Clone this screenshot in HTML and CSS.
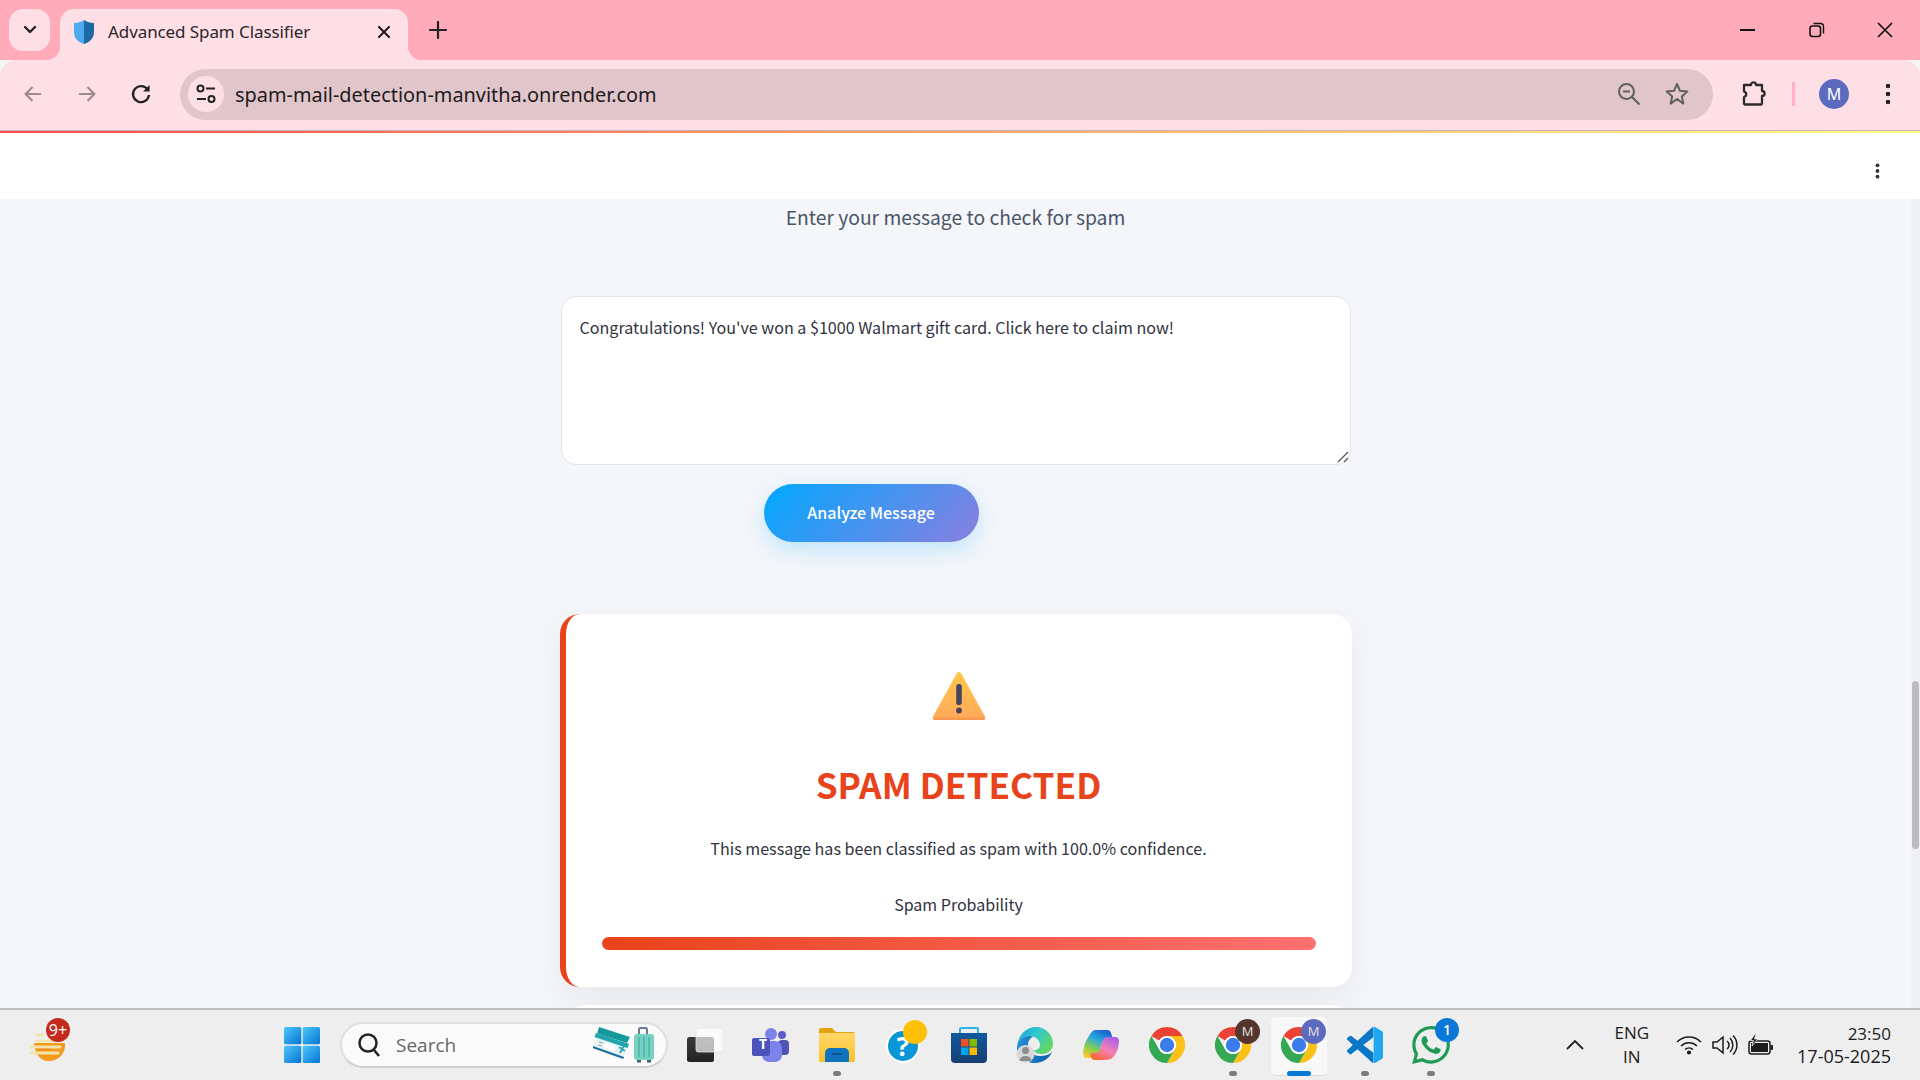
FILE: index.html
```html
<!DOCTYPE html>
<html lang="en">
<head>
<meta charset="utf-8">
<title>Advanced Spam Classifier</title>
<link rel="stylesheet" href="styles.css">
</head>
<body>
<svg class="defs" aria-hidden="true">
  <defs>
    <symbol id="chrome" viewBox="0 0 36 36">
      <path fill="#ea4335" d="M18 0A18 18 0 0 1 33.59 9H18A9 9 0 0 0 10.2 13.5L2.41 9A18 18 0 0 1 18 0Z"/>
      <path fill="#fbc116" d="M33.59 9A18 18 0 0 1 18 36L25.8 22.5A9 9 0 0 0 25.8 13.5L18 9Z"/>
      <path fill="#34a853" d="M2.41 9A18 18 0 0 0 18 36L25.8 22.5A9 9 0 0 1 10.2 22.5Z"/>
      <circle cx="18" cy="18" r="9" fill="#fff"/>
      <circle cx="18" cy="18" r="7.2" fill="#3b7cea"/>
    </symbol>
    <linearGradient id="winG" x1="0" y1="0" x2="1" y2="1"><stop offset="0" stop-color="#4cc8fb"/><stop offset="1" stop-color="#0673d3"/></linearGradient>
    <linearGradient id="warnG" x1="0" y1="0" x2="0" y2="1"><stop offset="0" stop-color="#ffc84a"/><stop offset="1" stop-color="#ffa95c"/></linearGradient>
    <linearGradient id="folderG" x1="0" y1="0" x2="0" y2="1"><stop offset="0" stop-color="#ffd768"/><stop offset="1" stop-color="#fcc22d"/></linearGradient>
    <linearGradient id="edgeG" x1="0" y1="0" x2="1" y2=".6"><stop offset="0" stop-color="#1f9fd8"/><stop offset=".5" stop-color="#2fc8d0"/><stop offset="1" stop-color="#62d85e"/></linearGradient>
    <linearGradient id="edgeB" x1="0" y1="0" x2="1" y2="0"><stop offset="0" stop-color="#2a8fd8"/><stop offset="1" stop-color="#0b5cab"/></linearGradient>
    <linearGradient id="copA" x1=".7" y1="0" x2=".2" y2="1"><stop offset="0" stop-color="#1b5fd0"/><stop offset=".35" stop-color="#28a7e0"/><stop offset=".7" stop-color="#8ccf4a"/><stop offset="1" stop-color="#f7c92e"/></linearGradient>
    <linearGradient id="copB" x1=".8" y1="0" x2=".2" y2="1"><stop offset="0" stop-color="#a95fe8"/><stop offset=".5" stop-color="#f27fb8"/><stop offset="1" stop-color="#f9652f"/></linearGradient>
    <linearGradient id="storeG" x1="0" y1="0" x2="0" y2="1"><stop offset="0" stop-color="#0f5aa0"/><stop offset="1" stop-color="#173f72"/></linearGradient>
    <linearGradient id="taskG" x1="0" y1="0" x2="0" y2="1"><stop offset="0" stop-color="#3a3a3a"/><stop offset="1" stop-color="#222"/></linearGradient>
    <clipPath id="vsL"><rect x="0" y="0" width="17.6" height="24"/></clipPath>
    <clipPath id="vsR"><rect x="17.6" y="0" width="7" height="24"/></clipPath>
  </defs>
</svg>

<div class="app">
  <header class="tabstrip">
    <button class="tablist" aria-label="Search tabs">
      <svg width="14" height="10" viewBox="0 0 14 10"><path d="M2 2l5 5 5-5" fill="none" stroke="#222" stroke-width="2.4" stroke-linecap="round" stroke-linejoin="round"/></svg>
    </button>
    <div class="tab">
      <svg class="favicon" width="22" height="26" viewBox="0 0 22 26">
        <path fill="#4daaee" d="M11 1C8 3 5 4 1 4v9c0 6 4 10 10 12Z"/>
        <path fill="#1c6aa5" d="M11 1c3 2 6 3 10 3v9c0 6-4 10-10 12Z"/>
      </svg>
      <span class="tab-title">Advanced Spam Classifier</span>
      <svg class="tab-close" width="14" height="14" viewBox="0 0 14 14"><path d="M2 2l10 10M12 2L2 12" stroke="#222" stroke-width="2.2" stroke-linecap="round"/></svg>
    </div>
    <svg class="newtab" width="18" height="18" viewBox="0 0 18 18"><path d="M9 1v16M1 9h16" stroke="#222" stroke-width="2.2" stroke-linecap="round"/></svg>
    <div class="winctl">
      <svg width="16" height="16" viewBox="0 0 16 16"><path d="M0 8h15" stroke="#111" stroke-width="2"/></svg>
      <svg width="16" height="16" viewBox="0 0 16 16"><rect x="1" y="4" width="10.5" height="10.5" rx="2.4" fill="none" stroke="#111" stroke-width="1.6"/><path d="M4.5 1.5h7a3 3 0 0 1 3 3v7" fill="none" stroke="#111" stroke-width="1.4"/></svg>
      <svg width="16" height="16" viewBox="0 0 16 16"><path d="M1 1l14 14M15 1L1 15" stroke="#111" stroke-width="1.7"/></svg>
    </div>
  </header>

  <nav class="toolbar">
    <svg class="tb-back" width="20" height="20" viewBox="0 0 20 20"><path d="M18 10H3M9.5 3L2.6 10l6.900 7" fill="none" stroke="#9a8a8e" stroke-width="2"/></svg>
    <svg class="tb-fwd" width="20" height="20" viewBox="0 0 20 20"><path d="M2 10h15M10.5 3l6.900 7-6.900 7" fill="none" stroke="#9a8a8e" stroke-width="2"/></svg>
    <svg class="tb-reload" width="22" height="22" viewBox="0 0 22 22"><path d="M18 7.2A8 8 0 1 0 19 12" fill="none" stroke="#222" stroke-width="2.3"/><path d="M19.6 2v6.600H13Z" fill="#222"/></svg>
    <div class="omnibox">
      <span class="site-info">
        <svg width="22" height="22" viewBox="0 0 22 22" fill="none" stroke="#222" stroke-width="2"><circle cx="5.5" cy="5.5" r="3"/><path d="M11 5.5h9M2 16h9"/><circle cx="16.5" cy="16" r="3"/></svg>
      </span>
      <span class="url">spam-mail-detection-manvitha.onrender.com</span>
      <svg class="omni-zoom" width="24" height="24" viewBox="0 0 24 24" fill="none" stroke="#5f5f5f" stroke-width="2"><circle cx="9.5" cy="9.5" r="7.5"/><path d="M6 9.5h7M15 15l7.500 7.500"/></svg>
      <svg class="omni-star" width="24" height="24" viewBox="0 0 24 24"><path d="M12 2l3 6.800 7.300.7-5.500 4.900 1.600 7.200L12 17l-6.400 4.600 1.600-7.200L1.700 9.500 9 8.800Z" fill="none" stroke="#5f5f5f" stroke-width="2" stroke-linejoin="round"/></svg>
    </div>
    <svg class="ext" width="26" height="26" viewBox="0 0 26 26"><path d="M3 4.500h7c0-3.500 5-3.500 5 0h6v6c3.500 0 3.500 5 0 5v7.500a1 1 0 0 1-1 1H4a1 1 0 0 1-1-1v-6.500c3-1 3-4.500 0-5.500Z" transform="translate(0 -.5)" fill="none" stroke="#2b2b2b" stroke-width="2.300" stroke-linejoin="round"/></svg>
    <span class="tb-sep"></span>
    <span class="avatar">M</span>
    <svg class="tb-kebab" width="6" height="22" viewBox="0 0 6 22" fill="#222"><circle cx="3" cy="3" r="2.300"/><circle cx="3" cy="11" r="2.300"/><circle cx="3" cy="19" r="2.300"/></svg>
  </nav>
  <div class="decoration"></div>

  <div class="st-header">
    <svg width="5" height="16" viewBox="0 0 5 16" fill="#31333f"><circle cx="2.500" cy="2.300" r="1.900"/><circle cx="2.500" cy="8" r="1.900"/><circle cx="2.500" cy="13.700" r="1.900"/></svg>
  </div>

  <main class="viewport">
    <div class="scroller">
      <section class="column">
        <p class="subtitle">Enter your message to check for spam</p>
        <div class="message-wrap">
          <textarea class="message" spellcheck="false">Congratulations! You've won a $1000 Walmart gift card. Click here to claim now!</textarea>
          <svg class="grip" width="12" height="12" viewBox="0 0 12 12"><path d="M11 1L1 11M11 7l-4 4" stroke="#555" stroke-width="1.200"/></svg>
        </div>
        <button class="analyze"><span>Analyze Message</span></button>
        <article class="result">
          <svg class="warn" width="54" height="48" viewBox="0 0 54 48">
            <path d="M27 0c1 0 1.800.6 2.300 1.500L53 44.500c.8 1.500-.2 3.500-2 3.500H3c-1.800 0-2.800-2-2-3.500L24.700 1.500C25.200.6 26 0 27 0Z" fill="url(#warnG)"/>
            <path d="M1.400 45.500h51.200L53 46.500c-.3 1-1 1.500-2 1.500H3c-1 0-1.700-.5-2-1.500Z" fill="#f79a50"/>
            <rect x="24.200" y="12" width="5.600" height="21" rx="2.800" fill="#44445a"/>
            <circle cx="27" cy="38.500" r="2.900" fill="#44445a"/>
          </svg>
          <h2 class="verdict">SPAM DETECTED</h2>
          <p class="detail">This message has been classified as spam with 100.0% confidence.</p>
          <p class="prob-label">Spam Probability</p>
          <div class="prob-bar"></div>
        </article>
        <article class="next-card"></article>
      </section>
    </div>
    <div class="scrollbar"><span class="thumb"></span></div>
  </main>

  <footer class="taskbar">
    <div class="widget">
      <svg width="36" height="34" viewBox="0 0 36 34">
        <path d="M4 12h31c1 10-6 18-16 18S5 22 4 12Z" fill="#f39a1f"/>
        <path d="M6 17h14" stroke="#e8820f" stroke-width="3"/>
        <path d="M7 4h6M7 10h14M1 16h29M1 22h27" stroke="#f5e3ac" stroke-width="3" stroke-linecap="round"/>
      </svg>
      <span class="badge-red">9+</span>
    </div>
    <div class="tb-item">
      <svg width="36" height="36" viewBox="0 0 36 36" fill="url(#winG)"><rect width="17.300" height="17.300" rx="1.500"/><rect x="18.700" width="17.300" height="17.300" rx="1.500"/><rect y="18.700" width="17.300" height="17.300" rx="1.500"/><rect x="18.700" y="18.700" width="17.300" height="17.300" rx="1.500"/></svg>
    </div>
    <div class="search">
      <svg width="24" height="26" viewBox="0 0 24 26" fill="none" stroke="#222" stroke-width="2.500"><circle cx="11" cy="11" r="8.500"/><path d="M17 18l5 6"/></svg>
      <span class="search-text">Search</span>
      <svg class="travel" width="62" height="36" viewBox="0 0 62 36">
        <path d="M6 0l31 10-3 6L4 7Z" fill="#159a9c"/>
        <path d="M3 6l33 11-5 13L0 19Z" fill="#e8f4f4"/>
        <path d="M3 6l33 11-1.500 4L1.500 10Z" fill="#23a3ab"/>
        <path d="M0 19l31 11-.8 2L-.8 21Z" fill="#1a6fa0"/>
        <path d="M12 16l10 3-1 5-10-3Z" fill="#fff"/>
        <path d="M26 20l6 4M31 19l-4 7" stroke="#3aa6c0" stroke-width="2"/>
        <path d="M6 15l4 1M5 18l4 1" stroke="#8aa6b0" stroke-width="1"/>
        <path d="M46 8V2.500a1.500 1.500 0 0 1 1.500-1.500h5a1.500 1.500 0 0 1 1.500 1.500V8" fill="none" stroke="#6a7a90" stroke-width="2"/>
        <rect x="41" y="7" width="20" height="26" rx="3" fill="#74d2c2"/>
        <path d="M46 10v20M51 10v20M56 10v20" stroke="#4fb0a3" stroke-width="1.400"/>
        <rect x="44" y="33" width="4" height="2.500" fill="#4a5a70"/><rect x="54" y="33" width="4" height="2.500" fill="#4a5a70"/>
      </svg>
    </div>
    <div class="tb-item">
      <svg width="36" height="34" viewBox="0 0 36 34">
        <rect x="0" y="9" width="27" height="25" rx="2.500" fill="url(#taskG)"/>
        <rect x="9" y="0" width="27" height="24" rx="2" fill="#fff" fill-opacity=".68" stroke="#e2e2e2" stroke-width=".8"/>
      </svg>
    </div>
    <div class="tb-item">
      <svg width="38" height="34" viewBox="0 0 38 34">
        <circle cx="30" cy="7" r="4" fill="#5b5fc7"/>
        <rect x="26" y="12" width="11" height="15" rx="4" fill="#4f52b2"/>
        <circle cx="19" cy="6" r="6" fill="#7b83eb"/>
        <rect x="10" y="13" width="20" height="21" rx="7" fill="#7b83eb"/>
        <rect x="0" y="10" width="18" height="18" rx="2" fill="#4b53bc"/>
      </svg>
      <span class="teams-t">T</span>
    </div>
    <div class="tb-item">
      <svg width="36" height="34" viewBox="0 0 36 34">
        <path d="M0 2a2 2 0 0 1 2-2h11l4 4h17a2 2 0 0 1 2 2v4H0Z" fill="#e2a50d"/>
        <rect y="5" width="36" height="29" rx="1" fill="url(#folderG)"/>
        <path d="M6 34V25a5 5 0 0 1 5-5h14a5 5 0 0 1 5 5v9Z" fill="#0f73bd"/>
        <path d="M13 26h10" stroke="#0a4f86" stroke-width="1.600"/>
      </svg>
      <i class="pip"></i>
    </div>
    <div class="tb-item">
      <svg width="34" height="36" viewBox="0 0 34 36">
        <circle cx="17" cy="19" r="17" fill="#fff"/>
        <circle cx="17" cy="19" r="15" fill="#0b96d6"/>
      </svg>
      <span class="help-q">?</span>
      <span class="badge-yellow"></span>
    </div>
    <div class="tb-item">
      <svg width="36" height="36" viewBox="0 0 36 36">
        <path d="M9 6V2a1 1 0 0 1 1-1h16a1 1 0 0 1 1 1v4" fill="none" stroke="#2fb2e8" stroke-width="2"/>
        <path d="M0 6h36v26a4 4 0 0 1-4 4H4a4 4 0 0 1-4-4Z" fill="url(#storeG)"/>
        <rect x="10" y="12" width="7.500" height="7.500" fill="#f25022"/><rect x="18.500" y="12" width="7.500" height="7.500" fill="#7fba00"/>
        <rect x="10" y="20.500" width="7.500" height="7.500" fill="#00a4ef"/><rect x="18.500" y="20.500" width="7.500" height="7.500" fill="#ffb900"/>
      </svg>
    </div>
    <div class="tb-item">
      <svg width="38" height="38" viewBox="0 0 38 38">
        <path d="M1 21C2 9 10 1 20 1c10 0 17 8 17 17 0 6-5 10-11 10-4 0-7-1-8-4 3 0 6-1 6-5 0-6-6-9-11-9C8 10 3 15 1 21Z" fill="url(#edgeG)"/>
        <path d="M1 21c1-6 6-11 12-11 2 0 3 .3 4 1-3 1-5 4-5 8 0 6 5 11 12 11 4 0 9-1 12-4-3 7-10 11-17 11C9 37 0 30 1 21Z" fill="url(#edgeB)"/>
        <circle cx="9.500" cy="28" r="9" fill="#d8d8d8"/>
        <circle cx="9.500" cy="24.500" r="3.500" fill="#8e8e8e"/>
        <path d="M3.500 35a6 5 0 0 1 12 0Z" fill="#8e8e8e"/>
      </svg>
    </div>
    <div class="tb-item">
      <svg width="36" height="32" viewBox="0 0 36 32">
        <path d="M12 1h12q3 0 4 3l2 6h-6q-4 0-5 4l-4 12q-1 3-4 3H4q-4 0-4-5C1 14 5 8 8 4q2-3 4-3Z" fill="url(#copA)"/>
        <path d="M24 31H12q-3 0-4-3l-1-4h6q3 0 4-4l3-9q1-3 4-3h8q4 0 4 5-1 12-8 17-3 1-8 1Z" fill="url(#copB)"/>
      </svg>
    </div>
    <div class="tb-item"><svg class="chrome-ic"><use href="#chrome"/></svg></div>
    <div class="tb-item">
      <svg class="chrome-ic"><use href="#chrome"/></svg>
      <span class="profile profile-brown">M</span>
      <i class="pip"></i>
    </div>
    <div class="tb-item tb-active">
      <span class="active-bg"></span>
      <svg class="chrome-ic"><use href="#chrome"/></svg>
      <span class="profile profile-blue">M</span>
      <i class="active-pip"></i>
    </div>
    <div class="tb-item">
      <svg width="36" height="36" viewBox="0 0 24 24">
        <g clip-path="url(#vsL)"><path fill="#0a78c7" d="M23.150 2.587L18.210.21a1.494 1.494 0 0 0-1.705.29l-9.460 8.630-4.120-3.128a.999.999 0 0 0-1.276.057L.327 7.261A1 1 0 0 0 .326 8.740L3.899 12 .326 15.260a1 1 0 0 0 .001 1.479L1.650 17.940a.999.999 0 0 0 1.276.057l4.120-3.128 9.460 8.630a1.492 1.492 0 0 0 1.704.29l4.942-2.377A1.500 1.500 0 0 0 24 20.060V3.939a1.500 1.500 0 0 0-.85-1.352zm-5.146 14.861L10.826 12l7.178-5.448v10.896z"/></g>
        <g clip-path="url(#vsR)"><path fill="#22a7f2" d="M17.600 0h1l4.550 2.587A1.500 1.500 0 0 1 24 3.939V20.060a1.500 1.500 0 0 1-.85 1.353L18.600 24h-1Z"/></g>
      </svg>
      <i class="pip"></i>
    </div>
    <div class="tb-item">
      <svg width="38" height="38" viewBox="0 0 24 24"><path fill="#1f9a55" d="M17.472 14.382c-.297-.149-1.758-.867-2.030-.967-.273-.099-.471-.148-.670.150-.197.297-.767.966-.940 1.164-.173.199-.347.223-.644.075-.297-.150-1.255-.463-2.390-1.475-.883-.788-1.480-1.761-1.653-2.059-.173-.297-.018-.458.130-.606.134-.133.298-.347.446-.520.149-.174.198-.298.298-.497.099-.198.050-.371-.025-.520-.075-.149-.669-1.612-.916-2.207-.242-.579-.487-.500-.669-.510-.173-.008-.371-.010-.570-.010-.198 0-.520.074-.792.372-.272.297-1.040 1.016-1.040 2.479 0 1.462 1.065 2.875 1.213 3.074.149.198 2.096 3.200 5.077 4.487.709.306 1.262.489 1.694.625.712.227 1.360.195 1.871.118.571-.085 1.758-.719 2.006-1.413.248-.694.248-1.289.173-1.413-.074-.124-.272-.198-.570-.347m-5.421 7.403h-.004a9.870 9.870 0 01-5.031-1.378l-.361-.214-3.741.982.998-3.648-.235-.374a9.860 9.860 0 01-1.510-5.260c.001-5.450 4.436-9.884 9.888-9.884 2.640 0 5.122 1.030 6.988 2.898a9.825 9.825 0 012.893 6.994c-.003 5.450-4.437 9.884-9.885 9.884m8.413-18.297A11.815 11.815 0 0012.050 0C5.495 0 .160 5.335.157 11.892c0 2.096.547 4.142 1.588 5.945L.057 24l6.305-1.654a11.882 11.882 0 005.683 1.448h.005c6.554 0 11.890-5.335 11.893-11.893a11.821 11.821 0 00-3.480-8.413z"/></svg>
      <span class="badge-blue">1</span>
      <i class="pip"></i>
    </div>

    <div class="tray">
      <svg class="tray-chev" width="18" height="10" viewBox="0 0 18 10"><path d="M1 9l8-8 8 8" fill="none" stroke="#222" stroke-width="1.800"/></svg>
      <div class="lang"><span>ENG</span><span>IN</span></div>
      <svg width="26" height="20" viewBox="0 0 26 20" fill="none" stroke="#1c1c1c" stroke-width="1.600"><path d="M1 7a17 17 0 0 1 24 0M5 11a11.500 11.500 0 0 1 16 0M9 14.500a6 6 0 0 1 8 0"/><circle cx="13" cy="17.500" r="1.300" fill="#1c1c1c"/></svg>
      <svg width="26" height="22" viewBox="0 0 26 22" fill="none" stroke="#1c1c1c" stroke-width="1.500"><path d="M1 8v6h4l6 5V3L5 8ZM15 7a5 5 0 0 1 0 8M18 4a10 10 0 0 1 0 14M21 1.500a13.500 13.500 0 0 1 0 19"/></svg>
      <svg width="26" height="22" viewBox="0 0 26 22"><rect x="1" y="7" width="21" height="13" rx="2.500" fill="none" stroke="#1c1c1c" stroke-width="1.500"/><rect x="3" y="9" width="17" height="9" fill="#1c1c1c"/><rect x="22.500" y="11" width="2.500" height="5" rx="1" fill="#1c1c1c"/><path d="M7 0L2.500 6.500h3L4 12l6-7H6.500L8 0Z" fill="#1c1c1c" stroke="#eee" stroke-width=".8"/></svg>
      <div class="clock"><span>23:50</span><span class="clock-date">17-05-2025</span></div>
    </div>
  </footer>
</div>
</body>
</html>
```
FILE: styles.css
```css
* { box-sizing: border-box; }
html, body { margin: 0; height: 100%; overflow: hidden; }
body { font-family: "Noto Sans", "Liberation Sans", sans-serif; background: #f4f6fa; }
.defs { position: absolute; width: 0; height: 0; }
.app { height: 100vh; display: flex; flex-direction: column; }

/* Browser tab strip */
.tabstrip { flex: 0 0 60px; background: #ffabba; display: flex; align-items: flex-start; padding: 9px 0 0 9px; }
.tablist { width: 41px; height: 42px; border: 0; padding: 0; border-radius: 14px; background: #ffdfe6; display: flex; align-items: center; justify-content: center; }
.tab { position: relative; width: 348px; height: 51px; margin-left: 10px; padding: 0 17px 6px 13px; background: #ffdfe6; border-radius: 14px 14px 0 0; display: flex; align-items: center; }
.tab::before, .tab::after { content: ""; position: absolute; bottom: 0; width: 14px; height: 14px; }
.tab::before { left: -14px; background: radial-gradient(circle at 0 0, #ffabba 14px, #ffdfe6 14.5px); }
.tab::after { right: -14px; background: radial-gradient(circle at 100% 0, #ffabba 14px, #ffdfe6 14.5px); }
.tab-title { margin-left: 13px; flex: 1; font-size: 17px; line-height: 24px; color: #2a2527; font-family: "Noto Sans", sans-serif; letter-spacing: -.09px; }
.newtab { margin: 12px 0 0 21px; }
.winctl { margin-left: auto; height: 42px; width: 208px; padding: 0 27px 0 28px; display: flex; align-items: center; justify-content: space-between; }

/* Browser toolbar */
.toolbar { flex: 0 0 71px; background: #ffdfe6; border-radius: 16px 16px 0 0; border-bottom: 1px solid #c9b6bc; display: flex; align-items: center; padding: 0 0 2px 0; }
.tb-back { margin-left: 23px; }
.tb-fwd { margin-left: 34px; }
.tb-reload { margin-left: 33px; }
.omnibox { margin-left: 28px; width: 1533px; height: 51px; border-radius: 26px; background: #e0c5ca; display: flex; align-items: center; padding: 0 24px 0 8px; }
.site-info { width: 36px; height: 36px; border-radius: 50%; background: #ffdfe6; display: flex; align-items: center; justify-content: center; }
.url { margin-left: 11px; padding-top: 1px; flex: 1; font-size: 19.9px; color: #1f1a1c; line-height: 28px; }
.omni-zoom { margin-right: 24px; }
.ext { margin-left: 28px; }
.tb-sep { margin-left: 25px; width: 3px; height: 24px; background: #ffb3c1; }
.avatar { margin-left: 24px; width: 30px; height: 30px; border-radius: 50%; background: #5c6bc0; color: #fff; font-size: 16px; display: flex; align-items: center; justify-content: center; }
.tb-kebab { margin-left: 36px; }

.decoration { flex: 0 0 2px; background: linear-gradient(90deg, #ff4b4b, #fffd80); }

/* Streamlit header */
.st-header { flex: 0 0 66px; background: #fff; display: flex; justify-content: flex-end; align-items: center; padding: 10px 40px 0 0; }

/* Page body */
.viewport { flex: 1 1 0; min-height: 0; display: flex; background: #f4f6fa; font-family: "Noto Sans CJK SC", "Noto Sans", sans-serif; color: #31333f; }
.scroller { flex: 1; min-width: 0; overflow: hidden; }
.column { width: 792px; margin: 0 auto; padding-top: 2px; }
.subtitle { margin: 0; text-align: center; font-size: 19.3px; line-height: 32px; color: #4a5568; }
.message-wrap { position: relative; width: 790px; margin: 63px 0 0 1px; }
.message { display: block; width: 100%; height: 169px; padding: 18px 18px 16px; background: #fff; border: 1px solid #dfe5ec; border-radius: 15px; font-family: inherit; font-size: 16.1px; line-height: 24px; color: #31333f; resize: none; outline: 0; }
.grip { position: absolute; right: 2px; bottom: 2px; }
.analyze { display: block; width: 215px; height: 58px; margin: 19px 0 0 204px; padding: 0 0 3px; border: 0; border-radius: 29px; background: linear-gradient(135deg, #00a8ff, #8a7fe0); color: #fff; font-family: inherit; font-size: 16px; font-weight: 500; box-shadow: 0 8px 22px rgba(0, 168, 255, .22); }
.result { height: 373px; margin-top: 72px; padding: 46px 0 0; background: #fff; border-left: 6px solid #e8431a; border-radius: 20px; box-shadow: 0 10px 30px rgba(0, 0, 0, .06); display: flex; flex-direction: column; align-items: center; }
.warn { display: block; margin-top: 12px; }
.verdict { margin: 38px 0 0; font-size: 35.2px; line-height: 52px; font-weight: 700; color: #e8431a; }
.detail { margin: 24px 0 0; font-size: 16.1px; line-height: 28px; color: #31333f; }
.prob-label { margin: 28px 0 0; font-size: 16px; line-height: 28px; color: #31333f; }
.prob-bar { width: 714px; height: 13px; margin-top: 19px; border-radius: 7px; background: linear-gradient(90deg, #e8431a, #ff7070); }
.next-card { height: 300px; margin: 18px 0 0 6px; background: #fff; border-radius: 20px; box-shadow: 0 10px 30px rgba(0, 0, 0, .06); }
.scrollbar { flex: 0 0 9px; background: #eef0f3; }
.thumb { display: block; width: 7px; height: 168px; margin: 482px 0 0 1px; border-radius: 4px; background: #bcbcbc; }

/* Windows taskbar */
.taskbar { flex: 0 0 72px; position: relative; z-index: 1; background: #eeeeee; border-top: 2px solid #bdbdbd; display: flex; align-items: center; padding-bottom: 1px; font-family: "Open Sans", "Noto Sans", sans-serif; color: #1c1c1c; }
.widget { position: relative; flex: 0 0 269px; height: 100%; padding: 21px 0 0 30px; }
.badge-red { position: absolute; left: 46px; top: 8px; width: 24px; height: 24px; border-radius: 50%; background: #c42b1c; color: #fff; font-size: 16px; line-height: 24px; text-align: center; }
.tb-item { position: relative; flex: 0 0 66px; height: 100%; display: flex; align-items: center; justify-content: center; }
.search { flex: 0 0 328px; margin: 0 4px 0 5px; height: 46px; border-radius: 23px; background: #fafafa; border: 2px solid #dedede; border-bottom-color: #cfcfcf; display: flex; align-items: center; padding: 0 11px 0 15px; }
.search-text { margin-left: 15px; flex: 1; font-size: 19px; color: #666; }
.travel { display: block; }
.pip { position: absolute; left: 29px; bottom: 3px; width: 8px; height: 5px; border-radius: 3px; background: #7c7c7c; }
.teams-t { position: absolute; left: 16px; top: 25px; width: 18px; color: #fff; font-size: 14px; font-weight: 700; line-height: 18px; text-align: center; }
.help-q { position: absolute; left: 16px; top: 18px; width: 34px; color: #fff; font-size: 26px; font-weight: 700; line-height: 36px; text-align: center; }
.badge-yellow { position: absolute; left: 33px; top: 10px; width: 24px; height: 24px; border-radius: 50%; background: #ffc107; }
.chrome-ic { width: 36px; height: 36px; display: block; }
.profile { position: absolute; left: 35px; top: 9px; width: 25px; height: 25px; border-radius: 50%; color: #e8e0dc; font-size: 13px; line-height: 25px; text-align: center; }
.profile-brown { background: #54362e; }
.profile-blue { background: #5c6bc0; }
.active-bg { position: absolute; left: 5px; top: 7px; width: 56px; height: 59px; border-radius: 5px; background: #f8f8f8; border-bottom: 1px solid #dcdcdc; }
.tb-active .chrome-ic { position: relative; }
.tb-active .profile { z-index: 1; }
.active-pip { position: absolute; left: 21px; bottom: 3px; width: 24px; height: 5px; border-radius: 3px; background: #0078d4; }
.badge-blue { position: absolute; left: 37px; top: 8px; width: 24px; height: 24px; border-radius: 50%; background: #0a78d6; color: #fff; font-size: 14px; font-weight: 600; line-height: 24px; text-align: center; }
.tray { margin-left: auto; padding-right: 29px; display: flex; align-items: center; }
.tray svg { display: block; margin-left: 10px; }
.tray .tray-chev { margin-left: 0; margin-right: 30px; }
.lang { display: flex; flex-direction: column; align-items: center; font-size: 17px; line-height: 24px; margin-right: 17px; }
.clock { margin-left: 23px; display: flex; flex-direction: column; align-items: flex-end; font-size: 17px; line-height: 23px; }
.clock-date { font-size: 18px; }
```
